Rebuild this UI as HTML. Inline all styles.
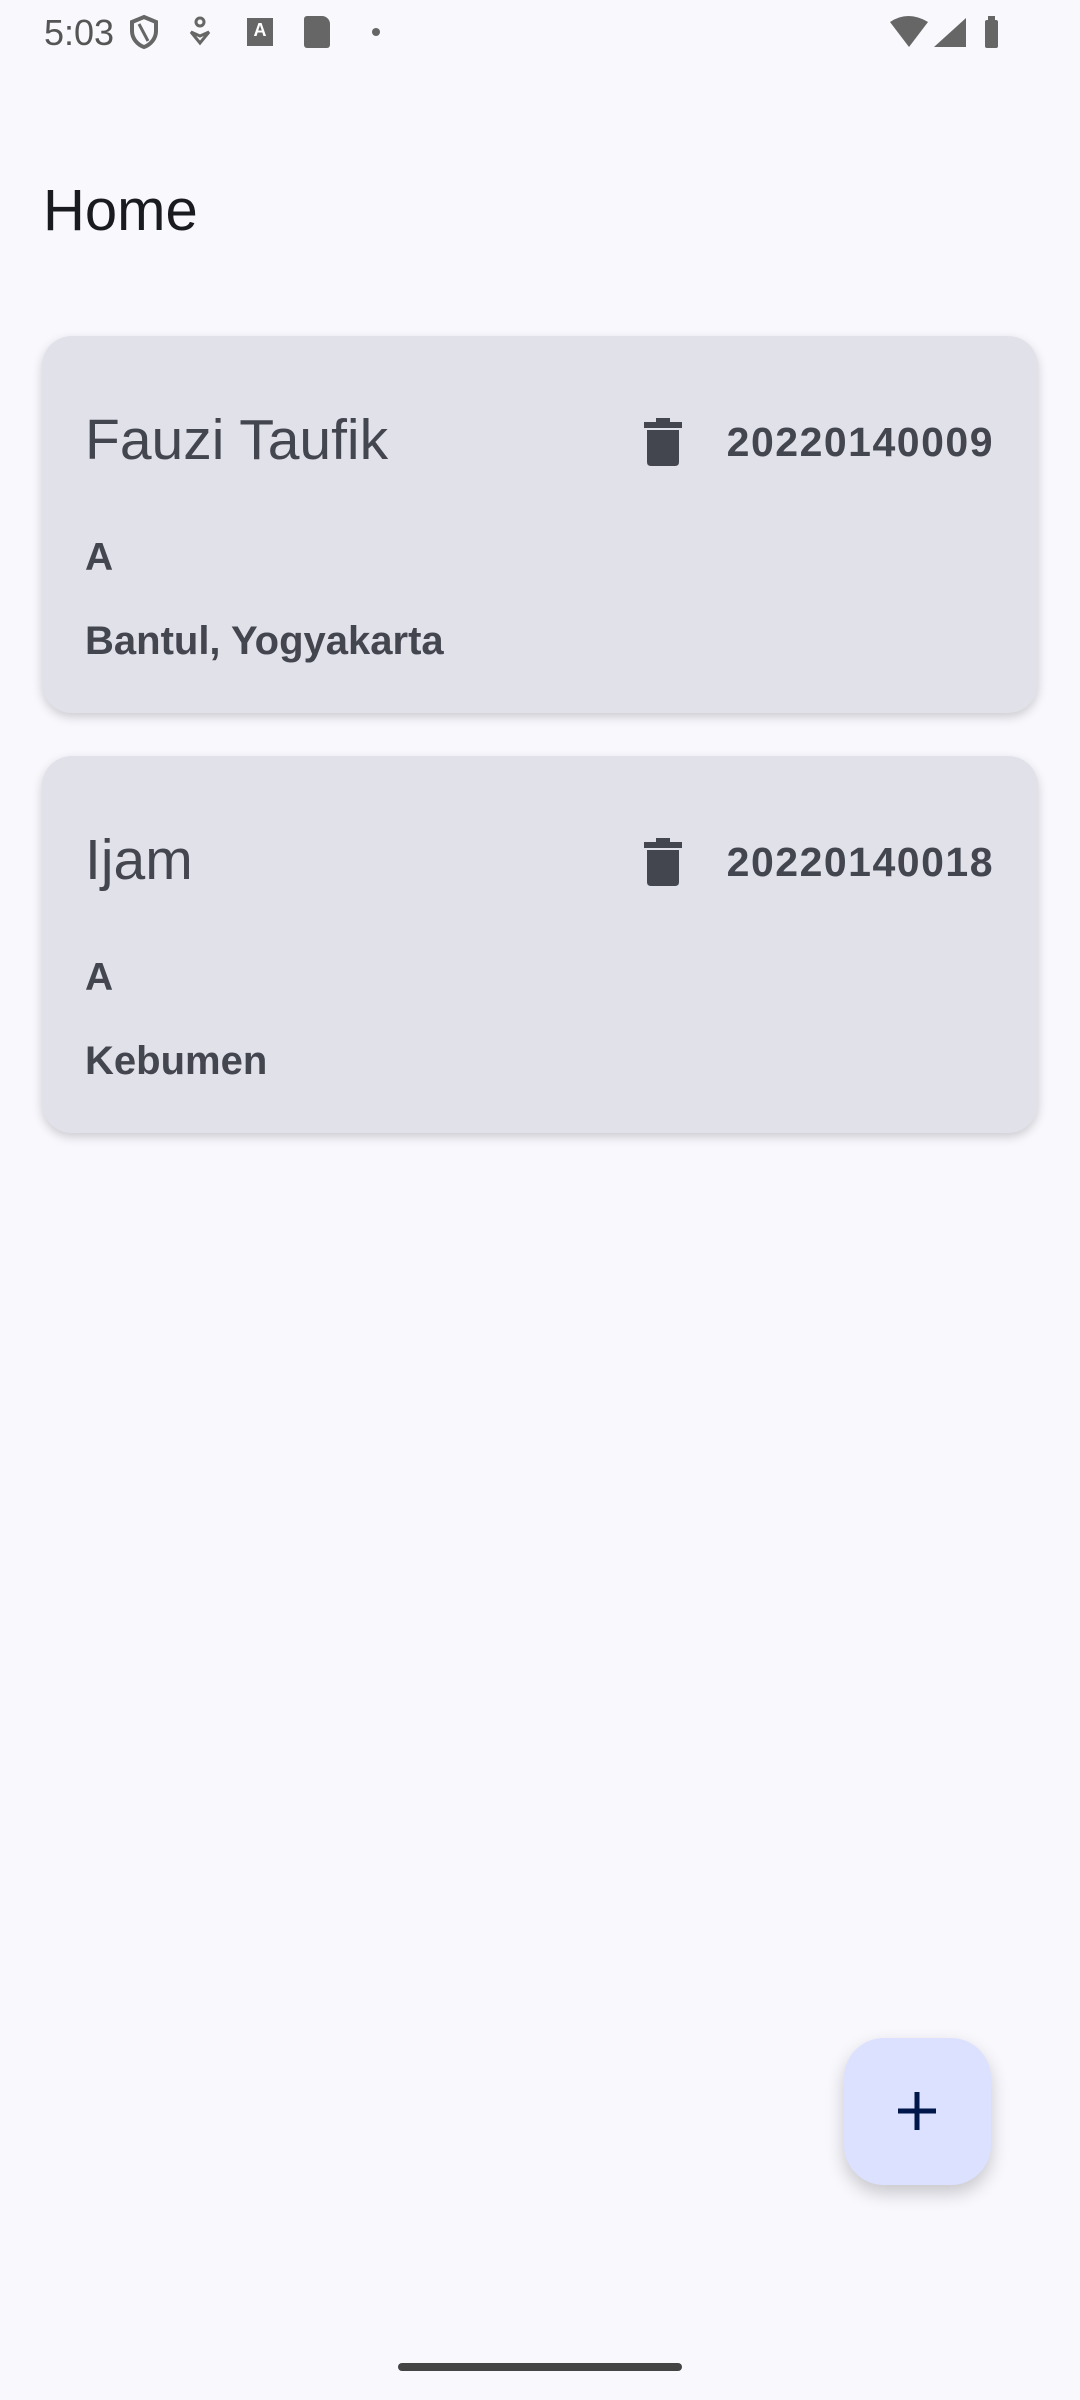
<!DOCTYPE html>
<html><head><meta charset="utf-8"><style>
body{margin:0;width:1080px;height:2400px;background:#f8f8fd;font-family:"Liberation Sans",Roboto,sans-serif;position:relative;overflow:hidden}
.a{position:absolute}
.card{position:absolute;left:42px;width:996px;height:377px;background:#e1e1ea;border-radius:30px;box-shadow:0 4px 10px rgba(0,0,0,.18)}
.name{position:absolute;left:43px;top:76px;font-size:57px;color:#44464f;line-height:1}
.id{position:absolute;right:44px;top:86px;font-size:41px;font-weight:bold;color:#44464f;line-height:1;letter-spacing:1.5px}
.tr{position:absolute;left:601px;top:82px}
.l1{position:absolute;left:43px;top:202px;font-size:39px;font-weight:bold;color:#44464f;line-height:1}
.l2{position:absolute;left:43px;top:285px;font-size:40px;font-weight:bold;color:#44464f;line-height:1;letter-spacing:0px}
</style></head><body>
<div class="a" style="left:44px;top:12px;font-size:36px;color:#555">5:03</div>
<svg class="a" style="left:128px;top:14px" width="32" height="36" viewBox="0 0 32 36"><path d="M16 3 L28 8 V17 C28 25 22 31 16 33 C10 31 4 25 4 17 V8 Z" fill="none" stroke="#666" stroke-width="4"/><path d="M11 10 L20 27" stroke="#666" stroke-width="3"/></svg>
<svg class="a" style="left:188px;top:16px" width="24" height="32" viewBox="0 0 24 32"><circle cx="12" cy="6" r="4" fill="none" stroke="#666" stroke-width="3"/><path d="M3 16 L12 27 L21 16 L12 20 Z" fill="none" stroke="#666" stroke-width="3"/></svg>
<div class="a" style="left:247px;top:18px;width:26px;height:28px;background:#666;color:#fff;font-size:18px;font-weight:bold;text-align:center;line-height:24px">A</div>
<div class="a" style="left:304px;top:16px;width:26px;height:32px;background:#666;border-radius:3px 8px 3px 3px"></div>
<div class="a" style="left:372px;top:28px;width:8px;height:8px;border-radius:50%;background:#666"></div>
<svg class="a" style="left:888px;top:14px" width="120" height="36" viewBox="0 0 120 36"><path d="M2 8 Q20 -4 40 8 L21 33 Z" fill="#666"/><path d="M78 4 V33 H46 Z" fill="#666"/><rect x="97" y="6" width="13" height="28" rx="2" fill="#666"/><rect x="100" y="2" width="7" height="5" fill="#666"/></svg>
<div class="a" style="left:43px;top:182px;font-size:58px;color:#1a1b20;line-height:1">Home</div>

<div class="card" style="top:336px">
<div class="name">Fauzi Taufik</div>
<svg class="tr" width="40" height="48" viewBox="0 0 40 48"><rect x="1" y="4" width="38" height="6" fill="#44464f"/><rect x="13" y="0" width="14" height="6" fill="#44464f"/><path d="M4 12 H36 V44 Q36 48 32 48 H8 Q4 48 4 44 Z" fill="#44464f"/></svg>
<div class="id">20220140009</div>
<div class="l1">A</div>
<div class="l2">Bantul, Yogyakarta</div>
</div>

<div class="card" style="top:756px">
<div class="name">Ijam</div>
<svg class="tr" width="40" height="48" viewBox="0 0 40 48"><rect x="1" y="4" width="38" height="6" fill="#44464f"/><rect x="13" y="0" width="14" height="6" fill="#44464f"/><path d="M4 12 H36 V44 Q36 48 32 48 H8 Q4 48 4 44 Z" fill="#44464f"/></svg>
<div class="id">20220140018</div>
<div class="l1">A</div>
<div class="l2">Kebumen</div>
</div>

<div class="a" style="left:844px;top:2038px;width:147px;height:147px;border-radius:40px;background:#dbe1ff;box-shadow:0 8px 18px rgba(0,0,0,.2)">
<svg class="a" style="left:54px;top:54px" width="38" height="38" viewBox="0 0 38 38"><path d="M19 0V38M0 19H38" stroke="#00174b" stroke-width="5"/></svg>
</div>
<div class="a" style="left:398px;top:2363px;width:284px;height:8px;border-radius:4px;background:#444"></div>
</body></html>
